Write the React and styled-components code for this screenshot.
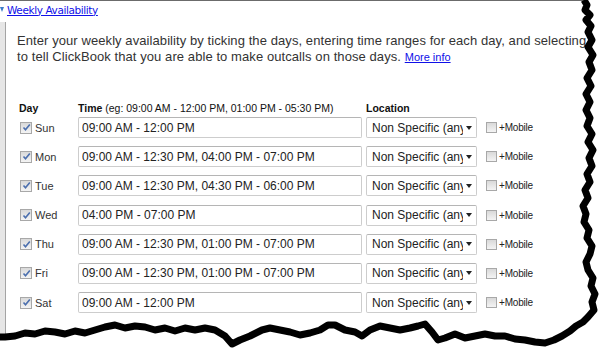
import React from 'react';
import styled, { createGlobalStyle } from 'styled-components';

const GlobalStyle = createGlobalStyle`
  html, body {
    margin: 0;
    padding: 0;
    background: #fff;
  }
  body {
    font-family: "Liberation Sans", Arial, sans-serif;
  }
`;

const schedule = [
  { day: 'Sun', time: '09:00 AM - 12:00 PM' },
  { day: 'Mon', time: '09:00 AM - 12:30 PM, 04:00 PM - 07:00 PM' },
  { day: 'Tue', time: '09:00 AM - 12:30 PM, 04:30 PM - 06:00 PM' },
  { day: 'Wed', time: '04:00 PM - 07:00 PM' },
  { day: 'Thu', time: '09:00 AM - 12:30 PM, 01:00 PM - 07:00 PM' },
  { day: 'Fri', time: '09:00 AM - 12:30 PM, 01:00 PM - 07:00 PM' },
  { day: 'Sat', time: '09:00 AM - 12:00 PM' }
];

// the torn paper edge, from the top right corner down and along the bottom
const tear = [
  [584, 0], [587, 5], [585, 10], [590, 15], [586, 20], [591, 26], [588, 32],
  [592, 40], [588, 47], [593, 55], [589, 62], [592, 70], [587, 78], [591, 86],
  [586, 94], [590, 102], [586, 110], [590, 118], [587, 126], [592, 134],
  [588, 142], [593, 150], [589, 158], [592, 166], [587, 174], [590, 182],
  [585, 190], [588, 198], [583, 206], [586, 214], [584, 222], [589, 230],
  [587, 238], [592, 246], [590, 254], [586, 262], [588, 270], [593, 278],
  [591, 286], [595, 294], [592, 302], [594, 310], [588, 317], [583, 322],
  [576, 326], [570, 331], [562, 336], [554, 340], [545, 343], [535, 342],
  [525, 340], [515, 339], [505, 336], [495, 336], [485, 334], [475, 336],
  [465, 338], [455, 334], [445, 338], [438, 340], [432, 332], [425, 324],
  [418, 326], [410, 328], [400, 330], [390, 328], [380, 326], [370, 330],
  [362, 336], [355, 332], [345, 330], [335, 325], [328, 325], [320, 330],
  [310, 333], [300, 335], [290, 332], [280, 330], [270, 328], [262, 330],
  [250, 336], [240, 340], [232, 344], [225, 336], [215, 330], [205, 328],
  [195, 330], [185, 328], [175, 331], [165, 328], [155, 330], [145, 327],
  [135, 326], [125, 328], [115, 325], [105, 327], [95, 330], [85, 333],
  [75, 331], [65, 334], [55, 332], [45, 331], [35, 334], [25, 333],
  [15, 336], [5, 337], [0, 337]
];

const tearLine = tear.map(p => p.join(',')).join(' ');
const outside = `M${tear.map(p => p.join(',')).join(' L')} L0,360 L611,360 L611,0 Z`;

function Check({ checked }) {
  return (
    <CheckBox checked={checked}>
      {checked && (
        <svg width="9" height="9" viewBox="0 0 9 9">
          <path d="M1.5 4.5 L3.5 6.8 L7.8 1.5" fill="none" stroke="#4b6fae" strokeWidth="1.6" />
        </svg>
      )}
    </CheckBox>
  );
}

export default function App() {
  return (
    <Page>
      <GlobalStyle />
      <Header>
        <Arrow />
        <HeaderLink href="#">Weekly Availability</HeaderLink>
      </Header>
      <Body>
        <Strip />
        <Panel>
          <Intro>
            Enter your weekly availability by ticking the days, entering time
            ranges for each day, and selecting locations
            <br />
            to tell ClickBook that you are able to make outcalls on those days.{' '}
            <MoreInfo href="#">More info</MoreInfo>
          </Intro>
          <HeadRow>
            <DayHead>Day</DayHead>
            <TimeHead>
              <b>Time</b> (eg: 09:00 AM - 12:00 PM, 01:00 PM - 05:30 PM)
            </TimeHead>
            <LocationHead>Location</LocationHead>
          </HeadRow>
          <Rows>
            {schedule.map(row => (
              <Row key={row.day}>
                <DayCell>
                  <Check checked />
                  <DayName>{row.day}</DayName>
                </DayCell>
                <TimeInput readOnly value={row.time} />
                <Select>
                  <SelectText>Non Specific (anywhere)</SelectText>
                  <Caret />
                </Select>
                <Mobile>
                  <Check />
                  <MobileLabel>+Mobile</MobileLabel>
                </Mobile>
              </Row>
            ))}
          </Rows>
        </Panel>
      </Body>
      <Tear width="611" height="360" viewBox="0 0 611 360">
        <path d={outside} fill="#fff" />
        <polyline points={tearLine} fill="none" stroke="#000" strokeWidth="7" strokeLinejoin="round" />
      </Tear>
    </Page>
  );
}

const Page = styled.div`
  position: relative;
  width: 611px;
  height: 360px;
  overflow: hidden;
  background: #fff;
`;

const Header = styled.div`
  display: flex;
  align-items: center;
  gap: 3px;
  height: 21px;
  border-top: 1px solid #6b6b6b;
`;

const Arrow = styled.span`
  width: 0;
  height: 0;
  margin-top: -4px;
  border-top: 5px solid #3d7cc9;
  border-left: 2px solid transparent;
  border-right: 2px solid transparent;
`;

const HeaderLink = styled.a`
  font-family: "DejaVu Sans", Verdana, sans-serif;
  font-size: 10.5px;
  letter-spacing: -0.4px;
  color: #1010e8;
  text-decoration: underline;
  margin-top: -4px;
`;

const Body = styled.div`
  display: flex;
  height: 338px;
`;

const Strip = styled.div`
  flex-shrink: 0;
  width: 5px;
  background: #e6e6e6;
  border-right: 1px solid #a4a4a4;
`;

const Panel = styled.div`
  flex: 1;
  min-width: 0;
  padding: 11px 0 0 11px;
`;

const Intro = styled.p`
  margin: 0;
  white-space: nowrap;
  font-size: 13px;
  letter-spacing: 0.08px;
  line-height: 16px;
  color: #333;
`;

const MoreInfo = styled.a`
  font-size: 11px;
  letter-spacing: 0;
  color: #1010e8;
  text-decoration: underline;
`;

const HeadRow = styled.div`
  display: flex;
  align-items: center;
  height: 13px;
  margin-top: 36px;
  font-size: 10.5px;
  color: #111;
`;

const DayHead = styled.span`
  width: 59px;
  padding-left: 2px;
  font-weight: bold;
`;

const TimeHead = styled.span`
  width: 288px;
`;

const LocationHead = styled.span`
  font-weight: bold;
`;

const Rows = styled.div`
  display: grid;
  row-gap: 8.2px;
  margin-top: 3px;
`;

const Row = styled.div`
  display: flex;
  align-items: center;
  height: 21px;
`;

const DayCell = styled.div`
  display: flex;
  align-items: center;
  gap: 3px;
  width: 58px;
  padding-left: 3px;
`;

const CheckBox = styled.span`
  display: inline-flex;
  flex-shrink: 0;
  align-items: center;
  justify-content: center;
  box-sizing: border-box;
  width: ${p => (p.checked ? 12 : 11)}px;
  height: ${p => (p.checked ? 12 : 11)}px;
  border: 1px solid #a8a8a8;
  background: linear-gradient(#d9d9d9, #f4f4f4);
`;

const DayName = styled.span`
  font-size: 11px;
  color: #333;
`;

const TimeInput = styled.input`
  flex-shrink: 0;
  box-sizing: border-box;
  width: 284px;
  height: 21px;
  margin: 0;
  padding: 0 3px;
  border: 1px solid #cdcdcd;
  border-top-color: #b5b5b5;
  border-radius: 2px;
  font-family: "Liberation Sans", Arial, sans-serif;
  font-size: 12px;
  color: #222;
  outline: none;
`;

const Select = styled.div`
  display: flex;
  flex-shrink: 0;
  align-items: center;
  box-sizing: border-box;
  width: 111px;
  height: 21px;
  margin-left: 4px;
  padding: 0 4px 0 5px;
  border: 1px solid #cdcdcd;
  border-top-color: #b5b5b5;
  border-radius: 2px;
`;

const SelectText = styled.span`
  width: 92px;
  overflow: hidden;
  white-space: nowrap;
  font-size: 12px;
  color: #222;
`;

const Caret = styled.span`
  width: 0;
  height: 0;
  margin-left: 3px;
  border-top: 4px solid #222;
  border-left: 3px solid transparent;
  border-right: 3px solid transparent;
`;

const Mobile = styled.div`
  display: flex;
  align-items: center;
  gap: 2px;
  margin-left: 9px;
`;

const MobileLabel = styled.span`
  font-size: 10px;
  letter-spacing: -0.2px;
  color: #222;
  white-space: nowrap;
`;

const Tear = styled.svg`
  position: absolute;
  inset: 0;
  pointer-events: none;
`;
